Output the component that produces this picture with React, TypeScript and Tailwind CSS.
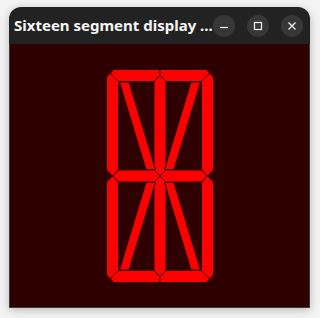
import React from "react";

const L = 106.5;
const R = 213.5;
const T = 69.5;
const B = 282.5;
const t = 12;
const h = 6;
const CX = 160;
const CY = 176;

type Pt = [number, number];

// mirror a polygon around the vertical centre line
const mx = (p: Pt[]): Pt[] => p.map(([x, y]) => [2 * CX - x, y]);
// mirror a polygon around the horizontal centre line of the digit
const my = (p: Pt[]): Pt[] => p.map(([x, y]) => [x, T + B - y]);

const topLeft: Pt[] = [
  [L + 7.5, T],
  [CX, T],
  [CX, T + h],
  [CX - h, T + t],
  [L + t, T + t],
  [L + 3.75, T + 3.75],
];
const upperLeft: Pt[] = [
  [L, T + 7.5],
  [L + 3.75, T + 3.75],
  [L + t, T + t],
  [L + t, CY - h],
  [L + h, CY],
  [L, CY - h],
];
const upperCenter: Pt[] = [
  [CX, T + h],
  [CX + h, T + t],
  [CX + h, CY - h],
  [CX, CY],
  [CX - h, CY - h],
  [CX - h, T + t],
];
const midLeft: Pt[] = [
  [L + h, CY],
  [L + t, CY - h],
  [CX - h, CY - h],
  [CX, CY],
  [CX - h, CY + h],
  [L + t, CY + h],
];
const diagUL: Pt[] = [
  [119.5, 82],
  [129, 82],
  [155.5, 169.5],
  [146, 169.5],
];

const segments: Pt[][] = [
  topLeft,
  mx(topLeft),
  my(topLeft),
  mx(my(topLeft)),
  upperLeft,
  mx(upperLeft),
  my(upperLeft),
  mx(my(upperLeft)),
  upperCenter,
  my(upperCenter),
  midLeft,
  mx(midLeft),
  diagUL,
  mx(diagUL),
  my(diagUL),
  mx(my(diagUL)),
];

function Display() {
  return (
    <svg width="299" height="263" viewBox="10 44 299 263" className="block">
      {segments.map((s, i) => (
        <polygon
          key={i}
          points={s.map((p) => p.join(",")).join(" ")}
          fill="#ff0000"
          stroke="#2e0000"
          strokeWidth="1"
        />
      ))}
    </svg>
  );
}

function TitleButton({ children }: { children: React.ReactNode }) {
  return (
    <div className="w-[22px] h-[22px] rounded-full bg-[#373737] flex items-center justify-center">
      {children}
    </div>
  );
}

export default function App() {
  return (
    <div className="w-[320px] h-[318px] bg-[#f4f4f4] pt-[7px] pl-[9px] overflow-hidden">
      <div className="w-[301px] h-[301px] rounded-t-[12px] shadow-[0_2px_10px_rgba(0,0,0,0.25)] flex flex-col">
        {/* Title bar */}
        <div className="h-[37px] bg-[#222222] rounded-t-[12px] flex items-center pl-[5px] pr-[7px]">
          <span
            className="text-[15px] font-bold text-[#f6f6f6] whitespace-nowrap leading-none"
            style={{ fontFamily: '"Noto Sans", "DejaVu Sans", sans-serif' }}
          >
            Sixteen segment display ...
          </span>
          <div className="ml-auto flex gap-[12px]">
            <TitleButton>
              <svg width="10" height="10" viewBox="0 0 10 10">
                <line x1="1" y1="6.5" x2="9" y2="6.5" stroke="#f0f0f0" strokeWidth="1.2" />
              </svg>
            </TitleButton>
            <TitleButton>
              <svg width="10" height="10" viewBox="0 0 10 10">
                <rect x="1.5" y="1.5" width="7" height="7" fill="none" stroke="#f0f0f0" strokeWidth="1.2" />
              </svg>
            </TitleButton>
            <TitleButton>
              <svg width="10" height="10" viewBox="0 0 10 10">
                <path d="M1.5 1.5 L8.5 8.5 M8.5 1.5 L1.5 8.5" stroke="#f0f0f0" strokeWidth="1.3" />
              </svg>
            </TitleButton>
          </div>
        </div>
        {/* Drawing area */}
        <div className="flex-1 bg-[#2e0000] border-x border-b border-[#3d3d3d]">
          <Display />
        </div>
      </div>
    </div>
  );
}
